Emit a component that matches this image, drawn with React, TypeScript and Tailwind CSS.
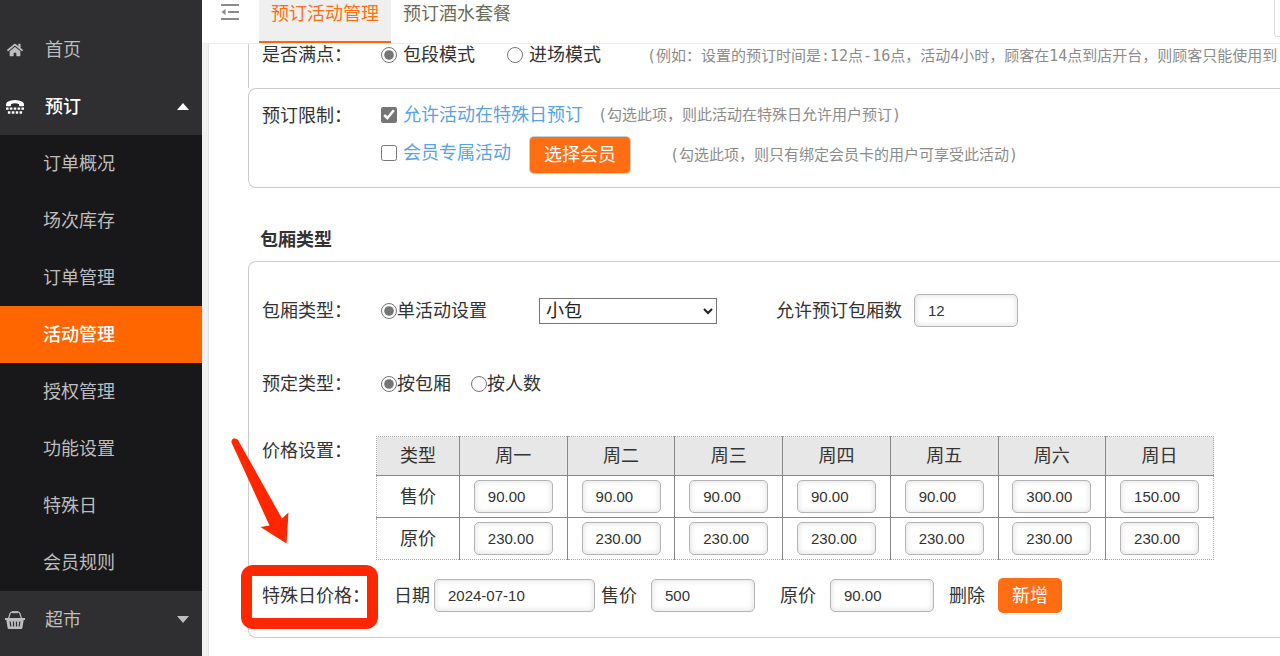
import React, { useState } from 'react'
import { FaHome } from 'react-icons/fa';

const subMenu = ['订单概况', '场次库存', '订单管理', '活动管理', '授权管理', '功能设置', '特殊日', '会员规则'];
const weekDays = ['周一', '周二', '周三', '周四', '周五', '周六', '周日'];

const priceRows = [
  { name: '售价', values: ['90.00', '90.00', '90.00', '90.00', '90.00', '300.00', '150.00'] },
  { name: '原价', values: ['230.00', '230.00', '230.00', '230.00', '230.00', '230.00', '230.00'] },
];

const inputClass =
  "h-[33px] rounded-[5px] border border-[#b4b4b4] bg-white pl-[13px] text-[15px] text-[#333] outline-none shadow-[inset_0_0_6px_rgba(0,0,0,0.14)] font-['Liberation_Sans',sans-serif]";
const checkClass = "h-4 w-4 shrink-0 accent-[#757575]";
const hintClass = "whitespace-nowrap text-[15px] text-[#8c8c8c] font-['DejaVu_Sans_Mono','Noto_Sans_CJK_SC',monospace]";

function BasketIcon() {
  return (
    <svg viewBox="0 0 20 18" className="h-[18px] w-5" fill="none" stroke="currentColor">
      <path d="M3.5 7.5 5.2 2.3Q5.5 1.2 6.8 1.2H13.2Q14.5 1.2 14.8 2.3L16.5 7.5" strokeWidth="1.2" />
      <path d="M7 1.2H13" strokeWidth="2" />
      <path d="M0 7h20v2h-1.3L17.3 17.2Q17.1 18 16.2 18H3.8Q2.9 18 2.7 17.2L1.3 9H0z" fill="currentColor" stroke="none" />
      <path d="M5.2 10.5 5.8 15.5M8.5 10.5V15.5M11.5 10.5V15.5M14.8 10.5 14.2 15.5" stroke="#2f2f31" strokeWidth="1.2" />
    </svg>
  );
}

function PhoneIcon() {
  return (
    <svg viewBox="0 0 18 14" className="h-3.5 w-[18px]" fill="currentColor">
      <path d="M0 4.5Q0 2.5 2 1.5 5 0 9 0t7 1.5q2 1 2 3v1q0 .8-.8.8h-3.4q-.8 0-.8-.8V4.3Q11.5 3.3 9 3.3t-4 1v1.2q0 .8-.8.8H.8Q0 6.3 0 5.5z" />
      <path d="M0 7.5h2.6v2.2H0zM3.8 7.5h2.6v2.2H3.8zM7.7 7.5h2.6v2.2H7.7zM11.6 7.5h2.6v2.2h-2.6zM15.4 7.5H18v2.2h-2.6z" />
      <path d="M1.9 11.3h2.5v2.5H1.9zM5.8 11.3h2.5v2.5H5.8zM9.7 11.3h2.5v2.5H9.7zM13.6 11.3h2.5v2.5h-2.5z" />
    </svg>
  );
}

function FoldIcon() {
  return (
    <svg viewBox="0 0 18 16" className="h-4 w-[18px]" fill="#8a8a8a">
      <rect width="18" height="2" rx="0.5" />
      <rect x="7" y="7" width="11" height="2" rx="0.5" />
      <rect y="14" width="18" height="2" rx="0.5" />
      <path d="M4.5 5v6L0.5 8z" />
    </svg>
  );
}

function Sidebar() {
  const [open, setOpen] = useState(true);
  const [active, setActive] = useState('活动管理');

  return (
    <aside className="w-[202px] shrink-0 bg-[#2f2f31] pt-[21px] text-lg text-[#bdbdbd]">
      <nav>
        <a href="#home" className="flex h-[57px] items-center pl-[7px]">
          <FaHome className="h-4 w-4" />
          <span className="ml-[22px]">首页</span>
        </a>
        <button
          className="flex h-[57px] w-full items-center pl-1.5 pr-[13px] font-medium text-white"
          onClick={() => setOpen(!open)}
        >
          <PhoneIcon />
          <span className="ml-[21px]">预订</span>
          <svg viewBox="0 0 12 7" className="ml-auto h-[7px] w-3" fill="currentColor"><path d="M6 0 12 7H0z" /></svg>
        </button>
        {open && (
          <div className="bg-[#18181a]">
            {subMenu.map((item) => (
              <a
                key={item}
                href="#menu"
                onClick={() => setActive(item)}
                className={item === active
                  ? "flex h-[57px] items-center bg-[#ff6600] pl-[43px] font-medium text-white"
                  : "flex h-[57px] items-center pl-[43px]"}
              >
                {item}
              </a>
            ))}
          </div>
        )}
        <button className="flex h-[57px] w-full items-center pl-[5px] pr-[13px]">
          <BasketIcon />
          <span className="ml-5">超市</span>
          <svg viewBox="0 0 12 7" className="ml-auto h-[7px] w-3" fill="currentColor"><path d="M0 0H12L6 7z" /></svg>
        </button>
      </nav>
    </aside>
  );
}

function Header() {
  return (
    <header className="flex h-11 shrink-0 items-start border-b border-[#ececec] bg-white text-lg/7">
      <button aria-label="收起菜单" className="ml-[19px] mt-1">
        <FoldIcon />
      </button>
      <a href="#activity" className="ml-5 h-[43px] border-b-2 border-[#ff6600] bg-[#efefef] px-3 text-[#ff6e12]">
        预订活动管理
      </a>
      <a href="#drinks" className="px-3 text-[#6b6b58]">预订酒水套餐</a>
      <div className="ml-auto h-[37px] w-1.5 rounded-bl-sm border-b border-l border-[#ddd]" />
    </header>
  );
}

function PriceTable() {
  return (
    <table className="w-[838px] table-fixed border-collapse border border-dotted border-[#aaa] text-center">
      <thead>
        <tr className="h-[39px] bg-[#e7e7e7]">
          <th className="w-[83px] font-normal">类型</th>
          {weekDays.map((day) => (
            <th key={day} className="border-l border-solid border-[#888] font-normal">{day}</th>
          ))}
        </tr>
      </thead>
      <tbody>
        {priceRows.map((row) => (
          <tr key={row.name} className="h-[42px]">
            <th className="border-t border-solid border-[#888] font-normal">{row.name}</th>
            {row.values.map((value, i) => (
              <td key={weekDays[i]} className="border-l border-t border-solid border-[#888]">
                <input
                  aria-label={weekDays[i] + row.name}
                  defaultValue={value}
                  className={`${inputClass} block mx-auto w-[79px]`}
                />
              </td>
            ))}
          </tr>
        ))}
      </tbody>
    </table>
  );
}

export default function App() {
  return (
    <div lang="zh-CN" className="flex h-screen overflow-hidden bg-white text-[#333] font-['Liberation_Sans','Noto_Sans_CJK_SC',sans-serif]">
      <Sidebar />
      <div className="flex min-w-0 flex-1 flex-col overflow-hidden">
        <Header />
        <div className="flex min-h-0 flex-1">
          <div className="w-[7px] shrink-0 border-r border-[#e2e2e2] bg-[#f1f1f1]" />
          <main className="min-w-0 flex-1 overflow-hidden pl-[39px] text-lg/[26px]">
            <section className="flex h-11 items-start whitespace-nowrap border-l border-[#ccc] pl-[13px] leading-[22px]">
              <span className="w-[119px] shrink-0">是否满点：</span>
              <label className="flex items-center gap-1.5">
                <input type="radio" name="mode" defaultChecked className={checkClass} />
                包段模式
              </label>
              <label className="ml-8 flex items-center gap-1.5">
                <input type="radio" name="mode" className={checkClass} />
                进场模式
              </label>
              <span className={`${hintClass} ml-[46px] leading-6`}>
                (例如：设置的预订时间是:12点-16点，活动4小时，顾客在14点到店开台，则顾客只能使用到
              </span>
            </section>

            <section className="flex h-[100px] rounded-l-lg border border-r-0 border-[#ccc] pl-[13px] pt-2">
              <span className="w-[119px] shrink-0 pt-1.5">预订限制：</span>
              <div className="flex flex-col gap-1">
                <div className="flex h-9 items-start leading-9">
                  <label className="flex items-center gap-1.5 text-[#57a3e8]">
                    <input type="checkbox" defaultChecked className={checkClass} />
                    允许活动在特殊日预订
                  </label>
                  <span className={`${hintClass} ml-[15px]`}>(勾选此项，则此活动在特殊日允许用户预订)</span>
                </div>
                <div className="flex h-9 items-start leading-9">
                  <label className="flex items-center gap-1.5 leading-8 text-[#57a3e8]">
                    <input type="checkbox" className={checkClass} />
                    会员专属活动
                  </label>
                  <button className="ml-[19px] h-9 rounded-[4px] bg-[#ff6e12] px-3.5 text-white ring-1 ring-[#ccc]">选择会员</button>
                  <span className={`${hintClass} ml-10`}>(勾选此项，则只有绑定会员卡的用户可享受此活动)</span>
                </div>
              </div>
            </section>

            <h2 className="ml-3 mt-[39px] font-bold">包厢类型</h2>

            <section className="relative mt-2 h-[377px] rounded-l-lg border border-r-0 border-[#ccc] pl-[13px] pt-8">
              <div className="flex h-[33px] items-center whitespace-nowrap">
                <span className="w-[119px] shrink-0">包厢类型：</span>
                <label className="flex items-center">
                  <input type="radio" name="setting" defaultChecked className={checkClass} />
                  单活动设置
                </label>
                <select aria-label="包厢" className="ml-[52px] h-[26px] w-[178px] rounded-none border border-[#767676] bg-white pl-0.5 leading-6 text-[#222]">
                  <option>小包</option>
                  <option>中包</option>
                  <option>大包</option>
                </select>
                <label htmlFor="rooms" className="ml-[59px]">允许预订包厢数</label>
                <input id="rooms" defaultValue="12" className={`${inputClass} ml-3 w-[104px]`} />
              </div>

              <div className="mt-11 flex h-[26px] items-center">
                <span className="w-[119px] shrink-0">预定类型：</span>
                <label className="flex items-center">
                  <input type="radio" name="book" defaultChecked className={checkClass} />
                  按包厢
                </label>
                <label className="ml-5 flex items-center">
                  <input type="radio" name="book" className={checkClass} />
                  按人数
                </label>
              </div>

              <div className="mt-[39px] flex">
                <span className="w-[114px] shrink-0 pt-0.5">价格设置：</span>
                <PriceTable />
              </div>

              <div className="mt-[19px] flex h-[33px] items-center whitespace-nowrap">
                <span className="w-[132px] shrink-0">特殊日价格：</span>
                <label htmlFor="date">日期</label>
                <input id="date" defaultValue="2024-07-10" className={`${inputClass} ml-1 w-[161px]`} />
                <label htmlFor="sale" className="ml-1.5">售价</label>
                <input id="sale" defaultValue="500" className={`${inputClass} ml-3.5 w-[104px]`} />
                <label htmlFor="origin" className="ml-[25px]">原价</label>
                <input id="origin" defaultValue="90.00" className={`${inputClass} ml-3.5 w-[104px]`} />
                <button className="ml-[15px]">删除</button>
                <button className="ml-[13px] h-[35px] rounded-[5px] bg-[#ff6e12] px-3.5 text-white">新增</button>
              </div>

              {/* 标注 */}
              <div className="pointer-events-none absolute -left-2 top-[303px] h-16 w-[137px] rounded-xl bg-[#ff2600] [clip-path:path(evenodd,'M0_0H138V64H0ZM11_11V53H126V11Z')]" />
              <svg viewBox="0 0 60 108" className="pointer-events-none absolute -left-[18px] top-44 h-[108px] w-[60px]" fill="#ff2600">
                <path d="M0.5 4.5Q0 1.5 2.5 0.5 5.5 0 7 2L51 80.5 57.500 74.500 55.500 105.500 29.500 89 38.500 87.500Z" />
              </svg>
            </section>
          </main>
        </div>
      </div>
    </div>
  );
}
